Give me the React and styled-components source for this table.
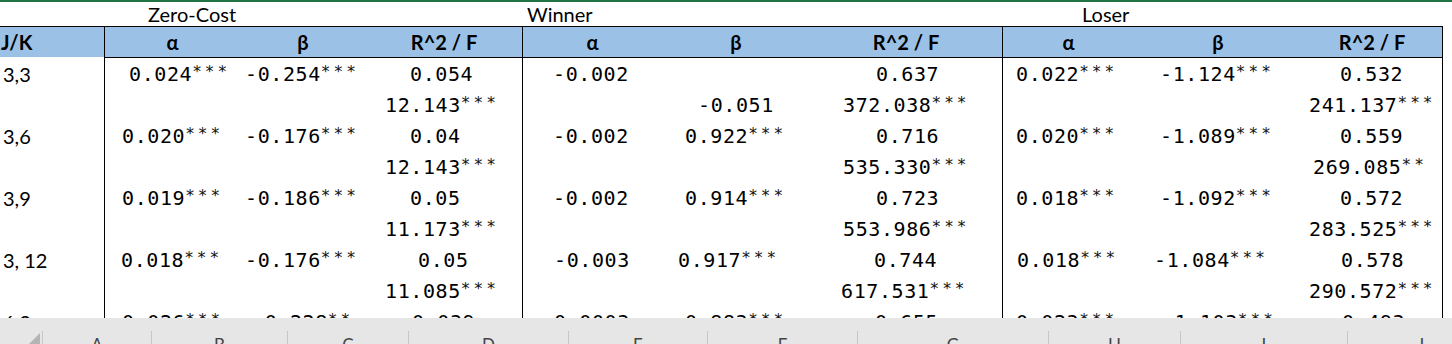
import React from "react";
import styled, { createGlobalStyle } from "styled-components";

const GlobalStyle = createGlobalStyle`
  html, body {
    margin: 0;
    padding: 0;
    background: #fff;
  }
  body {
    width: 1452px;
    height: 344px;
    overflow: hidden;
    font-family: "Lato", "Noto Sans", sans-serif;
  }
`;

// column left edges of the sheet (px)
const colStarts = [0, 104, 240, 366, 522, 662, 810, 1002, 1134, 1302];
const colWidths = [104, 136, 126, 156, 140, 148, 192, 132, 168, 141];
const groupEdges = [1, 4, 7];

const titles = [
  { col: 1, x: 148, text: "Zero-Cost" },
  { col: 4, x: 527, text: "Winner" },
  { col: 7, x: 1082, text: "Loser" },
];

const heads = ["J/K", "α", "β", "R^2 / F", "α", "β", "R^2 / F", "α", "β", "R^2 / F"];

// each row: label, then [x, text] per column (null = empty)
const rows = [
  ["3,3", [129, "0.024***"], [245, "-0.254***"], [410, "0.054"], [553, "-0.002"], null, [876, "0.637"], [1016, "0.022***"], [1160, "-1.124***"], [1340, "0.532"]],
  ["", null, null, [385, "12.143***"], null, [698, "-0.051"], [843, "372.038***"], null, null, [1309, "241.137***"]],
  ["3,6", [122, "0.020***"], [245, "-0.176***"], [410, "0.04"], [553, "-0.002"], [685, "0.922***"], [876, "0.716"], [1016, "0.020***"], [1160, "-1.089***"], [1340, "0.559"]],
  ["", null, null, [385, "12.143***"], null, null, [843, "535.330***"], null, null, [1313, "269.085**"]],
  ["3,9", [122, "0.019***"], [245, "-0.186***"], [410, "0.05"], [553, "-0.002"], [685, "0.914***"], [876, "0.723"], [1016, "0.018***"], [1160, "-1.092***"], [1340, "0.572"]],
  ["", null, null, [385, "11.173***"], null, null, [843, "553.986***"], null, null, [1309, "283.525***"]],
  ["3, 12", [121, "0.018***"], [245, "-0.176***"], [418, "0.05"], [554, "-0.003"], [678, "0.917***"], [874, "0.744"], [1017, "0.018***"], [1154, "-1.084***"], [1341, "0.578"]],
  ["", null, null, [385, "11.085***"], null, null, [841, "617.531***"], null, null, [1309, "290.572***"]],
  ["6,3", [122, "0.026***"], [252, "-0.228**"], [412, "0.039"], [554, "0.0003"], [685, "0.883***"], [875, "0.655"], [1016, "0.023***"], [1162, "-1.103***"], [1342, "0.493"]],
];

const letters = [
  { w: 42, l: "" },
  { w: 109, l: "A" },
  { w: 136, l: "B" },
  { w: 121, l: "C" },
  { w: 160, l: "D" },
  { w: 139, l: "E" },
  { w: 150, l: "F" },
  { w: 191, l: "G" },
  { w: 132, l: "H" },
  { w: 167, l: "I" },
  { w: 146, l: "J" },
];

function Value({ text }) {
  const m = text.match(/^([^*]*)(\**)$/);
  return (
    <>
      {m[1]}
      {m[2] ? <Stars>{m[2]}</Stars> : null}
    </>
  );
}

export default function App() {
  return (
    <Page>
      <GlobalStyle />
      <TopLine />
      <Sheet>
        {colStarts.map((start, i) => {
          const t = titles.find((tt) => tt.col === i);
          return (
            <TitleCell key={"t" + i} $pad={t ? t.x - start : 0}>
              {t ? t.text : ""}
            </TitleCell>
          );
        })}
        {heads.map((h, i) => (
          <HeadCell
            key={"h" + i}
            $label={i === 0}
            $edge={groupEdges.includes(i)}
            $last={i === heads.length - 1}
          >
            {h}
          </HeadCell>
        ))}
        {rows.map((row, r) =>
          row.map((cell, i) => {
            if (i === 0) {
              return <LabelCell key={r + "-" + i}>{cell}</LabelCell>;
            }
            const edge = groupEdges.includes(i);
            const pad = cell ? cell[0] - colStarts[i] - (edge ? 1 : 0) : 0;
            return (
              <DataCell
                key={r + "-" + i}
                $edge={edge}
                $last={i === row.length - 1}
                $pad={pad}
              >
                {cell ? <Value text={cell[1]} /> : ""}
              </DataCell>
            );
          })
        )}
      </Sheet>
      <ColumnBar>
        {letters.map((c, i) =>
          i === 0 ? (
            <Corner key="corner">
              <SelectAll />
            </Corner>
          ) : (
            <ColHead key={c.l} $w={c.w}>
              {c.l}
            </ColHead>
          )
        )}
      </ColumnBar>
    </Page>
  );
}

const Page = styled.div`
  width: 1452px;
  height: 344px;
  display: flex;
  flex-direction: column;
  overflow: hidden;
`;

const TopLine = styled.div`
  height: 2px;
  background: #217346;
  flex: none;
`;

const Sheet = styled.div`
  flex: none;
  height: 316px;
  overflow: hidden;
  display: grid;
  grid-template-columns: ${colWidths.map((w) => w + "px").join(" ")};
  grid-template-rows: 24px 32px;
  grid-auto-rows: 31px;
  align-content: start;
`;

const TitleCell = styled.div`
  box-sizing: border-box;
  padding-left: ${(p) => p.$pad}px;
  font-size: 20px;
  line-height: 24px;
  color: #000;
  white-space: nowrap;
  overflow: visible;
`;

const HeadCell = styled.div`
  box-sizing: border-box;
  background: #9bc2e6;
  border-top: 1px solid #000;
  border-bottom: 1px solid ${(p) => (p.$label ? "#fff" : "#000")};
  border-left: ${(p) => (p.$edge ? "1px solid #000" : "none")};
  border-right: ${(p) => (p.$last ? "1px solid #000" : "none")};
  display: flex;
  align-items: center;
  justify-content: ${(p) => (p.$label ? "flex-start" : "center")};
  padding-left: ${(p) => (p.$label ? "1px" : "0")};
  font-size: 20px;
  font-weight: 700;
  color: #000;
  white-space: nowrap;
`;

const LabelCell = styled.div`
  box-sizing: border-box;
  display: flex;
  align-items: center;
  padding-left: 3px;
  font-size: 20px;
  color: #000;
  white-space: nowrap;
`;

const DataCell = styled.div`
  box-sizing: border-box;
  display: flex;
  align-items: center;
  padding-left: ${(p) => p.$pad}px;
  border-left: ${(p) => (p.$edge ? "1px solid #000" : "none")};
  border-right: ${(p) => (p.$last ? "1px solid #000" : "none")};
  font-family: "DejaVu Sans Mono", "Liberation Mono", monospace;
  font-size: 20px;
  letter-spacing: 0.6px;
  color: #000;
  white-space: nowrap;
  overflow: visible;
`;

const Stars = styled.span`
  font-size: 16px;
  letter-spacing: 3.0px;
  position: relative;
  top: -2px;
  color: #111;
`;

const ColumnBar = styled.div`
  flex: 1;
  display: flex;
  background: #e6e6e6;
  overflow: hidden;
`;

const Corner = styled.div`
  flex: none;
  width: 42px;
  display: flex;
  justify-content: flex-end;
  align-items: flex-end;
  padding-right: 2px;
  box-sizing: border-box;
`;

const SelectAll = styled.div`
  width: 0;
  height: 0;
  border-left: 12px solid transparent;
  border-bottom: 12px solid #b4b4b4;
  margin-bottom: -1px;
`;

const ColHead = styled.div`
  flex: none;
  width: ${(p) => p.$w}px;
  box-sizing: border-box;
  margin-top: 13px;
  border-left: 1px solid #c6c6c6;
  text-align: center;
  padding-top: 4px;
  font-family: "Lato", "Noto Sans", sans-serif;
  font-size: 17px;
  line-height: 20px;
  color: #444;
`;
